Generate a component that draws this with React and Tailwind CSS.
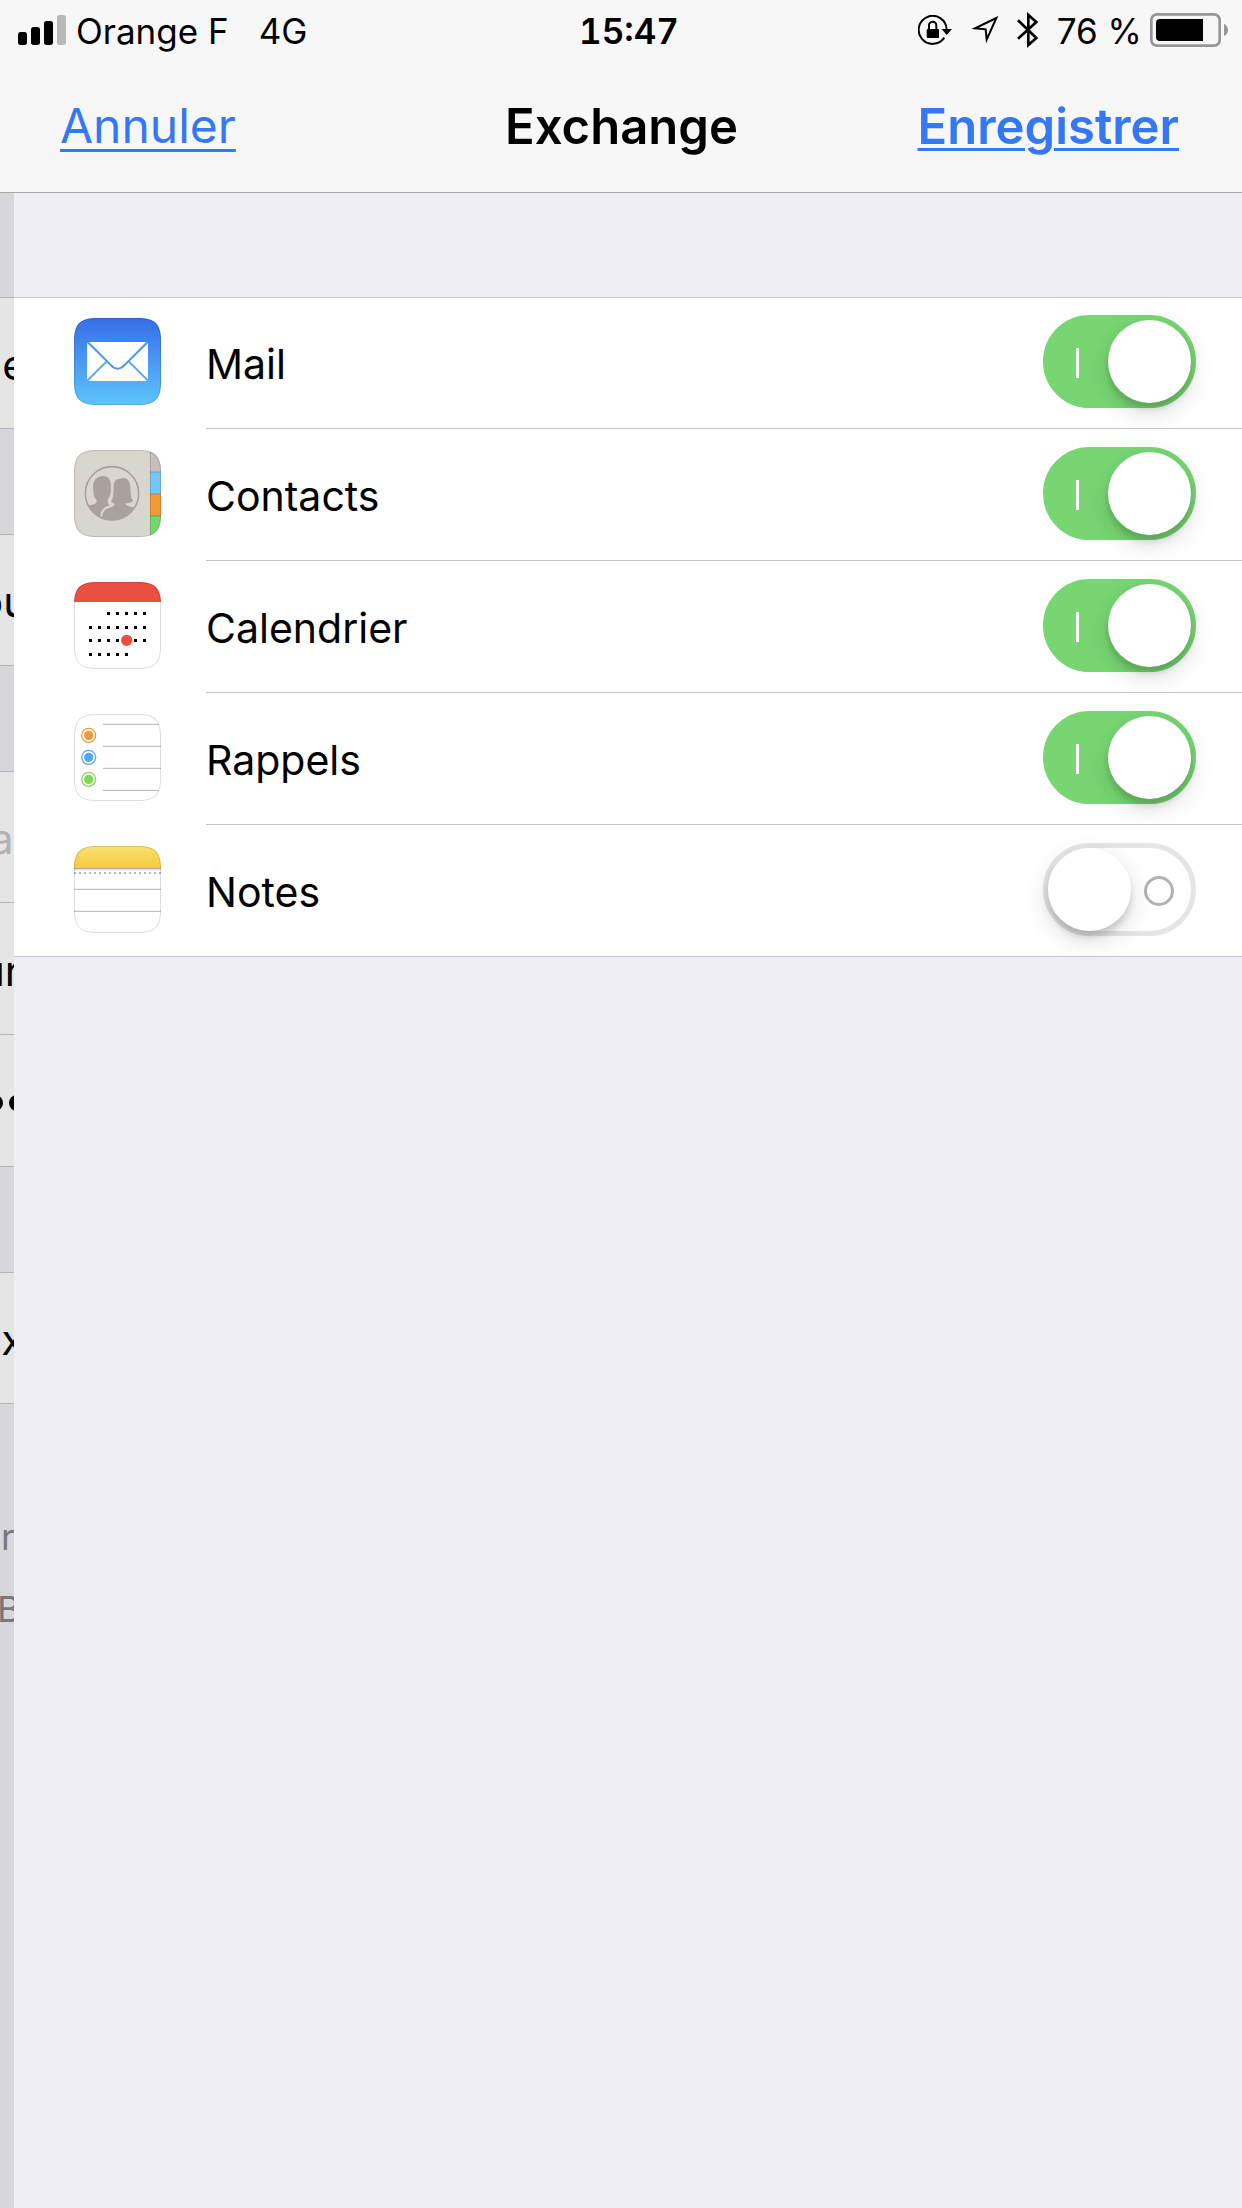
import React from "react";

function SignalIcon() {
  return (
    <svg className="h-[30px] w-12" viewBox="0 0 144 90" aria-hidden="true">
      <rect x="0" y="51" width="27" height="39" rx="8" />
      <rect x="39" y="36" width="27" height="54" rx="8" />
      <rect x="78" y="18" width="27" height="72" rx="8" />
      <rect x="117" y="0" width="27" height="90" rx="8" fill="#b9b9b9" />
    </svg>
  );
}

function RotationLockIcon() {
  return (
    <svg className="h-[30px] w-[34px]" viewBox="0 0 102 90" aria-hidden="true">
      <path d="M79 68A42 42 0 1 1 86 42" fill="none" stroke="#000" strokeWidth="6" />
      <path d="M71 42h31L86 60Z" />
      <rect x="26" y="42" width="37" height="27" rx="3" />
      <path d="M33 43V31a11 11 0 0 1 22 0v12" fill="none" stroke="#000" strokeWidth="6" />
    </svg>
  );
}

function LocationIcon() {
  return (
    <svg className="h-[30px] w-[30px]" viewBox="0 0 90 90" aria-hidden="true">
      <path d="M79 9L15 40L47 43L50 74Z" fill="none" stroke="#000" strokeWidth="6" strokeMiterlimit="10" />
    </svg>
  );
}

function BluetoothIcon() {
  return (
    <svg className="h-9 w-[22px]" viewBox="0 0 66 108" aria-hidden="true">
      <path d="M3 25L58 78L34 99V9L58 30L3 80" fill="none" stroke="#000" strokeWidth="8" />
    </svg>
  );
}

function BatteryIcon() {
  return (
    <svg className="h-[34px] w-[78px]" viewBox="0 0 234 102" aria-hidden="true">
      <rect x="4" y="4" width="205" height="94" rx="17" fill="none" stroke="#969696" strokeWidth="8" />
      <path d="M30 18H159V84H30Q18 84 18 72V30Q18 18 30 18Z" />
      <path d="M222 32Q234 39 234 51T222 69Z" fill="#969696" />
    </svg>
  );
}

function Tile({ children, id }) {
  return (
    <svg className="size-[87px] shrink-0" viewBox="0 0 261 261" aria-hidden="true">
      <defs>
        <clipPath id={id}>
          <path d="M60 0H201C242 2 259 19 261 60V201C259 242 242 259 201 261H60C19 259 2 242 0 201V60C2 19 19 2 60 0Z" />
        </clipPath>
      </defs>
      <g clipPath={`url(#${id})`}>
        {children}
        <path
          d="M60 0H201C242 2 259 19 261 60V201C259 242 242 259 201 261H60C19 259 2 242 0 201V60C2 19 19 2 60 0Z"
          fill="none"
          stroke="#000"
          strokeOpacity="0.13"
          strokeWidth="6"
        />
      </g>
    </svg>
  );
}

function MailIcon() {
  return (
    <Tile id="mail">
      <linearGradient id="mail-sky" x1="0" y1="0" x2="0" y2="1">
        <stop offset="0" stopColor="#376de9" />
        <stop offset="1" stopColor="#5dc5fa" />
      </linearGradient>
      <rect width="261" height="261" fill="url(#mail-sky)" />
      <rect x="39" y="72" width="183" height="117" rx="6" fill="#fff" />
      <g fill="none" strokeWidth="6">
        <path d="M41 72L109 140Q131 164 153 140L221 72" stroke="#4a95ef" />
        <path d="M98 130L40 188M164 130L222 188" stroke="#51a8f2" />
      </g>
    </Tile>
  );
}

function ContactsIcon() {
  return (
    <Tile id="contacts">
      <rect width="261" height="261" fill="#d9d6ce" />
      <rect x="228" width="33" height="66" fill="#c4c0b9" />
      <rect x="228" y="66" width="33" height="66" fill="#79c4f6" />
      <rect x="228" y="132" width="33" height="66" fill="#f19a38" />
      <rect x="228" y="198" width="33" height="63" fill="#76d572" />
      <path d="M228 66h33M228 132h33M228 198h33" stroke="#000" strokeOpacity="0.18" strokeWidth="3" />
      <path d="M229 0V261" stroke="#000" strokeOpacity="0.15" strokeWidth="3" />
      <clipPath id="contacts-disc">
        <circle cx="114" cy="130" r="80" />
      </clipPath>
      <g clipPath="url(#contacts-disc)" fill="#a9a29c">
        <path d="M111 155C118 144 119 128 119 112C119 94 124 86 137 87C158 78 168 92 169 112C170 134 171 146 178 152C172 158 162 160 155 160C155 168 166 170 184 173L190 215H82C84 190 88 180 106 173C116 170 122 168 122 162C118 160 114 158 111 155Z" />
        <path d="M68 150C60 142 59 136 58 122C54 100 62 80 84 78C104 78 113 90 110 112C112 128 108 138 102 148C100 158 102 163 108 166C88 174 83 184 82 215H30V168C50 164 70 166 68 150Z" />
        <path d="M82 200C82 176 96 170 112 168" fill="none" stroke="#d9d6ce" strokeWidth="5" />
      </g>
      <circle cx="114" cy="130" r="80" fill="none" stroke="#a9a29c" strokeWidth="5" />
    </Tile>
  );
}

const CALENDAR_ROWS = [
  { y: 90, from: 2, to: 6 },
  { y: 132, from: 0, to: 6 },
  { y: 171, from: 0, to: 6 },
  { y: 213, from: 0, to: 4 },
];

function CalendarIcon() {
  return (
    <Tile id="calendar">
      <rect width="261" height="261" fill="#fff" />
      <rect width="261" height="60" fill="#eb4f3d" />
      {CALENDAR_ROWS.map(({ y, from, to }) =>
        Array.from({ length: to - from + 1 }, (_, i) => (
          <rect key={`${y}-${i}`} x={45 + 27 * (from + i)} y={y} width="9" height="9" />
        ))
      )}
      <circle cx="158" cy="175" r="17" fill="#eb4f3d" />
    </Tile>
  );
}

const REMINDERS = [
  { y: 64, color: "#f19a38" },
  { y: 130, color: "#52a9f2" },
  { y: 196, color: "#82d852" },
];

function RemindersIcon() {
  return (
    <Tile id="reminders">
      <rect width="261" height="261" fill="#fff" />
      <path d="M87 31H255M87 97H261M87 163H261M87 229H255" stroke="#b4b4b6" strokeWidth="3" />
      {REMINDERS.map(({ y, color }) => (
        <g key={y}>
          <circle cx="44" cy={y} r="14" fill={color} />
          <circle cx="44" cy={y} r="21" fill="none" stroke={color} strokeWidth="4" />
        </g>
      ))}
    </Tile>
  );
}

function NotesIcon() {
  return (
    <Tile id="notes">
      <linearGradient id="notes-band" x1="0" y1="0" x2="0" y2="1">
        <stop offset="0" stopColor="#f9df71" />
        <stop offset="1" stopColor="#f6cb3f" />
      </linearGradient>
      <rect width="261" height="261" fill="#fff" />
      <rect width="261" height="66" fill="url(#notes-band)" />
      <path d="M0 68H261" stroke="#a9a8a6" strokeWidth="4" />
      <path d="M0 72H261" stroke="#e4e4e4" strokeWidth="4" />
      <path d="M0 81H261" stroke="#b8b8b8" strokeWidth="6" strokeDasharray="6 9" />
      <path d="M0 130H261M0 196H261" stroke="#b4b4b6" strokeWidth="3" />
    </Tile>
  );
}

const SERVICES = [
  { name: "Mail", Icon: MailIcon, on: true },
  { name: "Contacts", Icon: ContactsIcon, on: true },
  { name: "Calendrier", Icon: CalendarIcon, on: true },
  { name: "Rappels", Icon: RemindersIcon, on: true },
  { name: "Notes", Icon: NotesIcon, on: false },
];

function StatusBar() {
  return (
    <div className="grid h-[60px] grid-cols-[1fr_auto_1fr] items-center pr-[14px] pl-[18px] text-[35px] leading-none">
      <div className="flex items-center gap-[10px]">
        <SignalIcon />
        <span className="pt-[2px]">Orange F</span>
        <span className="ml-5 pt-[2px]">4G</span>
      </div>
      <time className="pt-[2px] pl-3 font-semibold tabular-nums">15:47</time>
      <div className="flex items-center justify-end">
        <RotationLockIcon />
        <span className="ml-[18px] flex"><LocationIcon /></span>
        <span className="ml-[17px] flex"><BluetoothIcon /></span>
        <span className="mr-2 ml-[18px] pt-[2px]">76 %</span>
        <BatteryIcon />
      </div>
    </div>
  );
}

function NavBar() {
  return (
    <nav className="grid h-[132px] grid-cols-[1fr_auto_1fr] items-center pr-[63px] pl-[60px] text-[49px] leading-none">
      <button type="button" className="justify-self-start text-[48px] text-[#3478f6] underline decoration-[3px] underline-offset-[6px]">
        Annuler
      </button>
      <h1 className="pl-1 font-semibold">Exchange</h1>
      <button type="button" className="justify-self-end font-semibold text-[#3478f6] underline decoration-[3px] underline-offset-[4px]">
        Enregistrer
      </button>
    </nav>
  );
}

function Switch({ id, defaultChecked }) {
  return (
    <span className="relative flex h-[93px] w-[153px] shrink-0">
      <input
        id={id}
        type="checkbox"
        role="switch"
        defaultChecked={defaultChecked}
        className="peer size-full cursor-pointer appearance-none rounded-full border-[5px] border-[#e5e5e5] bg-white checked:border-[#77d672] checked:bg-[#77d672]"
      />
      <span className="pointer-events-none absolute top-[33px] left-[33px] hidden h-[30px] w-[3px] bg-white peer-checked:block" />
      <span className="pointer-events-none absolute top-[33px] right-[22px] size-[30px] rounded-full border-[3px] border-[#b2b2b2] peer-checked:hidden" />
      <span className="pointer-events-none absolute top-[5px] left-[5px] size-[83px] rounded-full bg-white shadow-[0_9px_24px_rgba(0,0,0,0.15),0_6px_6px_rgba(0,0,0,0.13)] peer-checked:left-[65px]" />
    </span>
  );
}

function ServiceRow({ name, Icon, on }) {
  const id = `service-${name.toLowerCase()}`;
  return (
    <li className="group flex h-[132px] pl-[60px] first:h-[131px] last:h-[131px]">
      <span className="flex w-[132px] items-center pb-1 group-last:pb-[2px]">
        <Icon />
      </span>
      <div className="flex flex-1 items-center justify-between border-b border-[#c8c7cc] pr-[46px] pb-[3px] group-last:border-b-0">
        <label htmlFor={id} className="pt-[6px] text-[41px] leading-none">
          {name}
        </label>
        <Switch id={id} defaultChecked={on} />
      </div>
    </li>
  );
}

function PreviousCell({ children, className = "" }) {
  return (
    <div className={`flex h-[132px] items-center overflow-hidden border-b border-[#b4b3b8] bg-[#e5e5e5] pt-1 whitespace-nowrap ${className}`}>
      {children}
    </div>
  );
}

function PreviousGap() {
  return <div className="h-[105px]" />;
}

function PreviousPage() {
  return (
    <aside className="w-[14px] shrink-0 overflow-hidden bg-[#d7d6db] text-[42px] leading-none" aria-hidden="true">
      <div className="h-[104px]" />
      <PreviousCell className="border-t"><span className="-ml-2">le</span></PreviousCell>
      <PreviousGap />
      <PreviousCell className="border-t"><span className="-ml-[22px]">ou</span></PreviousCell>
      <PreviousGap />
      <PreviousCell className="border-t"><span className="-ml-[10px] text-[#b2b2b6]">a</span></PreviousCell>
      <PreviousCell><span className="-ml-[20px]">ur</span></PreviousCell>
      <PreviousCell>
        <span className="-ml-[13px] size-4 shrink-0 rounded-full bg-black" />
        <span className="ml-[6px] size-4 shrink-0 rounded-full bg-black" />
      </PreviousCell>
      <PreviousGap />
      <PreviousCell className="border-t"><span className="-ml-[9px]">ix</span></PreviousCell>
      <div className="pt-[97px] text-[36px] leading-[72px] whitespace-nowrap text-[#78787c]">
        <p className="-ml-[20px]">er</p>
        <p className="-ml-[3px]">B</p>
      </div>
    </aside>
  );
}

export default function App() {
  return (
    <div className="flex min-h-screen flex-col bg-[#efeef4] font-['Inter',sans-serif] text-black">
      <header className="border-b border-[#a7a7aa] bg-[#f7f7f7]">
        <StatusBar />
        <NavBar />
      </header>
      <div className="flex flex-1">
        <PreviousPage />
        <main className="min-w-0 flex-1 pt-[104px]">
          <ul className="border-y border-[#c8c7cc] bg-white">
            {SERVICES.map((service) => (
              <ServiceRow key={service.name} {...service} />
            ))}
          </ul>
        </main>
      </div>
    </div>
  );
}
